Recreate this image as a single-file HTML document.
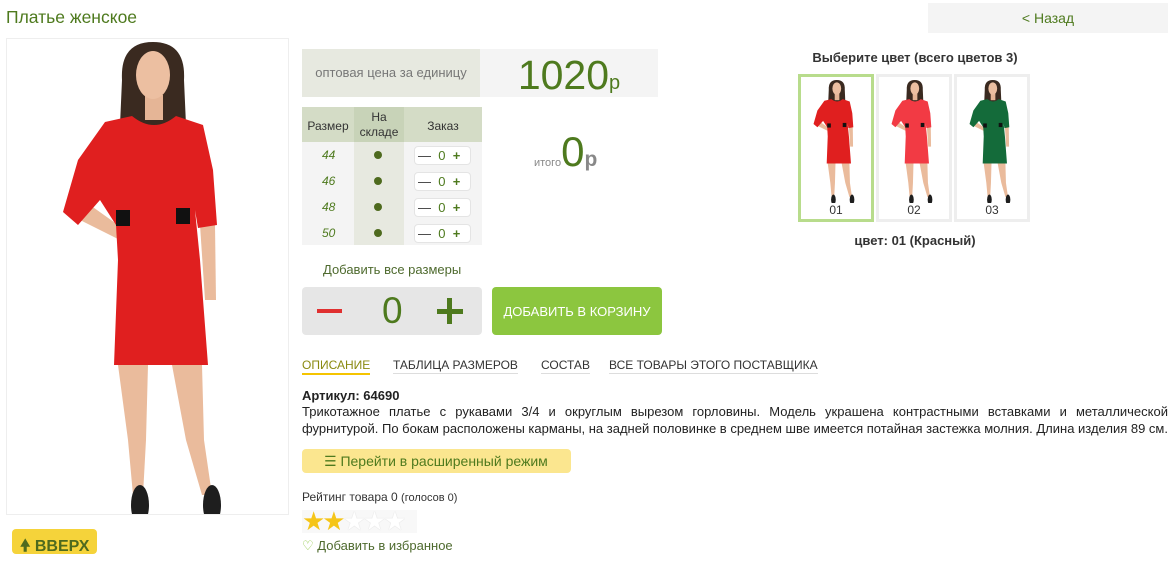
<!DOCTYPE html>
<html><head><meta charset="utf-8">
<style>
*{margin:0;padding:0;box-sizing:border-box}
body{width:1176px;height:548px;overflow:hidden;background:#fff;font-family:"Liberation Sans","DejaVu Sans",sans-serif;color:#333;position:relative}
.a{position:absolute}
.g{color:#4e7a1e}
</style></head><body>
<svg width="0" height="0" style="position:absolute"><defs>
<g id="w">
<path d="M122,80 Q120,42 153,42 Q186,42 184,80 L186,125 L120,125 Z" fill="#3a2a20"/>
<rect x="145" y="95" width="18" height="25" fill="#e5b596"/>
<ellipse cx="153" cy="75" rx="17" ry="24" fill="#ecbfa1"/>
<path d="M118,365 L148,365 L146,440 L143,495 L133,495 L128,440 Z" fill="#eabb9c"/>
<path d="M172,365 L202,365 L204,440 L212,495 L202,495 L186,440 Z" fill="#eabb9c"/>
<ellipse cx="140" cy="505" rx="9" ry="20" fill="#1e1e1e"/>
<ellipse cx="212" cy="505" rx="9" ry="20" fill="#1e1e1e"/>
<path d="M68,210 L80,220 L120,240 L125,230 L90,205 Z" fill="#eabb9c"/>
<path d="M200,225 L215,225 L216,300 L205,300 Z" fill="#eabb9c"/>
<path d="M105,122 L132,116 Q154,134 176,116 L203,125 L213,170 L217,225 L198,228 L195,210 L200,260 L208,365 L114,365 L118,260 L116,225 L100,200 L78,225 L63,212 L78,160 Z" fill="var(--c,#e01f1f)"/>
<rect x="116" y="210" width="14" height="16" fill="#111"/>
<rect x="176" y="208" width="14" height="16" fill="#111"/>
</g></defs></svg>

<div class="a g" style="left:6px;top:7px;font-size:17.5px">Платье женское</div>
<div class="a" style="left:6px;top:38px;width:283px;height:477px;border:1px solid #eee">
<svg width="281" height="475" viewBox="7 39 281 475"><use href="#w"/></svg></div>
<div class="a" style="left:12px;top:529px;width:85px;height:25px;background:#f5d33a;border-radius:4px;color:#4e6a1e;font-size:16px;padding:6px 0 0 8px;font-weight:bold">🠝 ВВЕРХ</div>

<div class="a g" style="left:928px;top:3px;width:240px;height:30px;background:#f4f4f4;text-align:center;font-size:14px;line-height:31px">&lt; Назад</div>

<div class="a" style="left:302px;top:49px;width:178px;height:48px;background:#e7e9e0;color:#777;font-size:13px;text-align:center;line-height:48px">оптовая цена за единицу</div>
<div class="a g" style="left:480px;top:49px;width:178px;height:48px;background:#f4f4f4;text-align:center;font-size:41px;line-height:52px">1020<span style="font-size:20px">р</span></div>

<div class="a" style="left:302px;top:107px;width:180px;height:138px;background:#f4f4f4"></div>
<div class="a" style="left:302px;top:107px;width:180px;height:35px;background:#d4dcc6"></div>
<div class="a" style="left:354px;top:107px;width:50px;height:35px;background:#c8d3b8"></div>
<div class="a" style="left:354px;top:142px;width:50px;height:103px;background:#e7e9e0"></div>
<div class="a" style="left:302px;top:119px;width:52px;text-align:center;font-size:12px">Размер</div>
<div class="a" style="left:354px;top:110px;width:50px;text-align:center;font-size:12px;line-height:15px">На<br>складе</div>
<div class="a" style="left:404px;top:119px;width:78px;text-align:center;font-size:12px">Заказ</div>
<div class="a" style="left:302px;top:142px;width:180px">
<div style="height:26px;position:relative"><i class="a g" style="left:20px;top:6px;font-size:12px">44</i><b class="a" style="left:72px;top:9px;width:8px;height:8px;border-radius:50%;background:#4e6a1e"></b><div class="a" style="left:112px;top:4px;width:57px;height:19px;background:#fff;border:1px solid #e4e4e4;border-radius:4px;font-size:13px;color:#333;line-height:17px;padding-left:3px">—&nbsp;&nbsp;<span class="g">0</span>&nbsp;&nbsp;<span class="g" style="font-weight:bold">+</span></div></div>
<div style="height:26px;position:relative"><i class="a g" style="left:20px;top:6px;font-size:12px">46</i><b class="a" style="left:72px;top:9px;width:8px;height:8px;border-radius:50%;background:#4e6a1e"></b><div class="a" style="left:112px;top:4px;width:57px;height:19px;background:#fff;border:1px solid #e4e4e4;border-radius:4px;font-size:13px;color:#333;line-height:17px;padding-left:3px">—&nbsp;&nbsp;<span class="g">0</span>&nbsp;&nbsp;<span class="g" style="font-weight:bold">+</span></div></div>
<div style="height:26px;position:relative"><i class="a g" style="left:20px;top:6px;font-size:12px">48</i><b class="a" style="left:72px;top:9px;width:8px;height:8px;border-radius:50%;background:#4e6a1e"></b><div class="a" style="left:112px;top:4px;width:57px;height:19px;background:#fff;border:1px solid #e4e4e4;border-radius:4px;font-size:13px;color:#333;line-height:17px;padding-left:3px">—&nbsp;&nbsp;<span class="g">0</span>&nbsp;&nbsp;<span class="g" style="font-weight:bold">+</span></div></div>
<div style="height:26px;position:relative"><i class="a g" style="left:20px;top:6px;font-size:12px">50</i><b class="a" style="left:72px;top:9px;width:8px;height:8px;border-radius:50%;background:#4e6a1e"></b><div class="a" style="left:112px;top:4px;width:57px;height:19px;background:#fff;border:1px solid #e4e4e4;border-radius:4px;font-size:13px;color:#333;line-height:17px;padding-left:3px">—&nbsp;&nbsp;<span class="g">0</span>&nbsp;&nbsp;<span class="g" style="font-weight:bold">+</span></div></div>
</div>

<div class="a" style="left:534px;top:128px;white-space:nowrap"><span style="font-size:11px;color:#888">итого</span><span class="g" style="font-size:42px">0</span><b style="font-size:21px;color:#888">р</b></div>

<div class="a" style="left:323px;top:262px;font-size:13px;color:#4e6a2e">Добавить все размеры</div>
<div class="a" style="left:302px;top:287px;width:180px;height:48px;background:#e6e6e6;border-radius:4px"></div>
<div class="a" style="left:317px;top:309px;width:25px;height:4px;background:#e03030"></div>
<div class="a g" style="left:382px;top:290px;font-size:37px">0</div>
<div class="a" style="left:437px;top:309px;width:26px;height:5px;background:#4e7a1e"></div>
<div class="a" style="left:447px;top:298px;width:5px;height:26px;background:#4e7a1e"></div>
<div class="a" style="left:492px;top:287px;width:170px;height:48px;background:#8cc63f;border-radius:4px;color:#fff;font-size:13px;text-align:center;line-height:49px">ДОБАВИТЬ В КОРЗИНУ</div>

<div class="a" style="left:302px;top:358px;font-size:12px;white-space:nowrap;height:20px;width:600px">
<span class="a" style="left:0;color:#8a8a10;border-bottom:2px solid #f5c400;padding-bottom:1px">ОПИСАНИЕ</span>
<span class="a" style="left:91px;border-bottom:1px solid #ddd;padding-bottom:1px">ТАБЛИЦА РАЗМЕРОВ</span>
<span class="a" style="left:239px;border-bottom:1px solid #ddd;padding-bottom:1px">СОСТАВ</span>
<span class="a" style="left:307px;border-bottom:1px solid #ddd;padding-bottom:1px">ВСЕ ТОВАРЫ ЭТОГО ПОСТАВЩИКА</span></div>

<div class="a" style="left:302px;top:388px;font-size:13px;font-weight:bold;color:#222">Артикул: 64690</div>
<div class="a" style="left:302px;top:403px;width:866px;font-size:13px;line-height:17px;text-align:justify;text-align-last:justify;white-space:nowrap;color:#222">Трикотажное платье с рукавами 3/4 и округлым вырезом горловины. Модель украшена контрастными вставками и металлической</div>
<div class="a" style="left:302px;top:420px;font-size:13px;line-height:17px;white-space:nowrap;color:#222">фурнитурой. По бокам расположены карманы, на задней половинке в среднем шве имеется потайная застежка молния. Длина изделия 89 см.</div>

<div class="a" style="left:302px;top:449px;width:269px;height:24px;background:#fbe68f;border-radius:4px;font-size:14px;line-height:25px;padding-left:22px;color:#4e7a1e">☰ Перейти в расширенный режим</div>

<div class="a" style="left:302px;top:490px;font-size:12px">Рейтинг товара 0 <span style="font-size:11px">(голосов 0)</span></div>
<div class="a" style="left:302px;top:510px;width:115px;height:23px;background:#f8f8f8;font-size:26px;line-height:22px;letter-spacing:-3px;overflow:hidden"><span style="color:#f5c518">★★</span><span style="color:#fff;text-shadow:0 0 1px #ccc">★★★</span></div>
<div class="a" style="left:302px;top:538px;font-size:13px;color:#4e6a2e"><span style="color:#8cc63f">♡</span> Добавить в избранное</div>

<div class="a" style="left:790px;top:50px;width:250px;text-align:center;font-size:13px;font-weight:bold;color:#333">Выберите цвет (всего цветов 3)</div>
<div class="a" style="left:798px;top:74px;width:76px;height:148px;border:3px solid #b8dc8c"><svg width="70" height="124" viewBox="40 38 220 480" style="display:block;margin-top:2px"><use href="#w"/></svg><div style="text-align:center;font-size:12px;color:#333">01</div></div>
<div class="a" style="left:876px;top:74px;width:76px;height:148px;border:3px solid #eee;--c:#f23a44"><svg width="70" height="124" viewBox="40 38 220 480" style="display:block;margin-top:2px"><use href="#w"/></svg><div style="text-align:center;font-size:12px;color:#333">02</div></div>
<div class="a" style="left:954px;top:74px;width:76px;height:148px;border:3px solid #eee;--c:#146b3a"><svg width="70" height="124" viewBox="40 38 220 480" style="display:block;margin-top:2px"><use href="#w"/></svg><div style="text-align:center;font-size:12px;color:#333">03</div></div>
<div class="a" style="left:790px;top:233px;width:250px;text-align:center;font-size:13px;font-weight:bold;color:#333">цвет: 01 (Красный)</div>
</body></html>
